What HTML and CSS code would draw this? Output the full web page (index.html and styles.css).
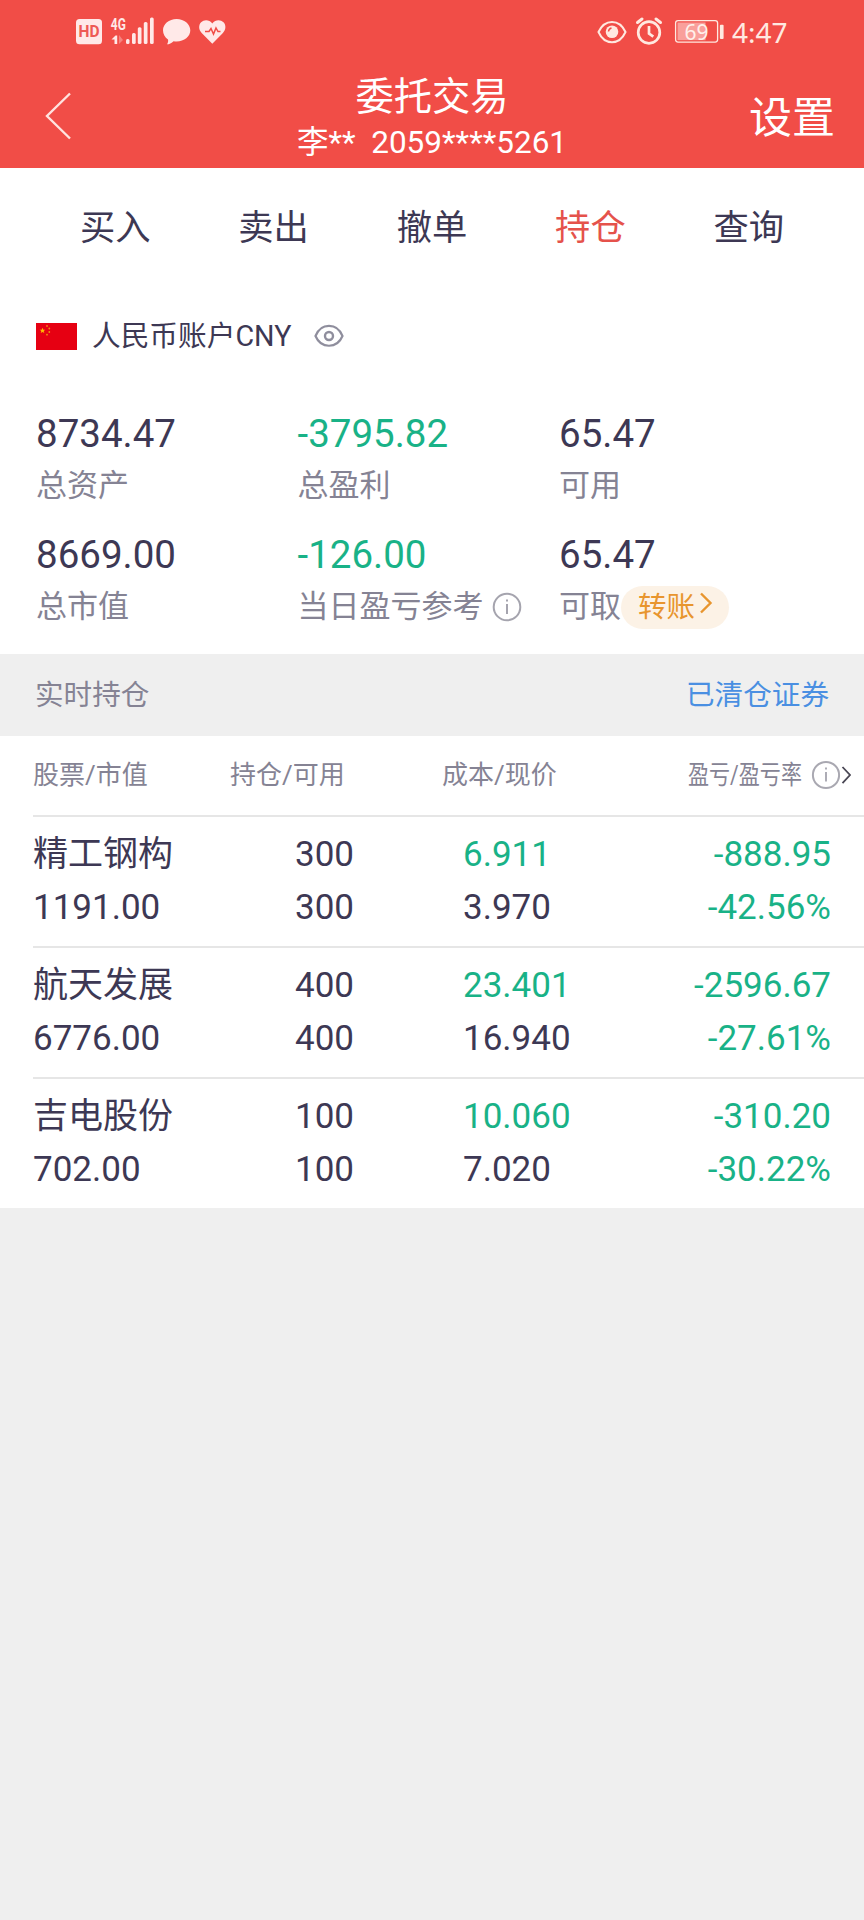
FILE: index.html
```
<!DOCTYPE html>
<html lang="zh-CN">
<head>
<meta charset="utf-8">
<title>委托交易</title>
<link rel="stylesheet" href="styles.css">
</head>
<body>
<header class="top">
  <div class="status">
    <svg class="status-left" width="152" height="30" viewBox="75 16 152 30">
      <rect x="76" y="19" width="26" height="25.3" rx="3.5" fill="#ffe9e8"/>
      <text class="hd" x="89" y="37.2" text-anchor="middle" textLength="21" lengthAdjust="spacingAndGlyphs">HD</text>
      <text class="net" x="110.8" y="30" textLength="15" lengthAdjust="spacingAndGlyphs">4G</text>
      <path d="M111.5 39.5l4-4h1.700v8.500h-2.700v-4.500z" fill="#ffe9e8"/>
      <path d="M119 35v9l4-4z" fill="#ffe9e8" opacity=".35"/>
      <g fill="#ffe9e8">
        <rect x="126" y="39" width="3.500" height="5" rx="1.500"/>
        <rect x="132" y="33" width="3.700" height="11" rx="1.500"/>
        <rect x="137.800" y="27.300" width="3.700" height="16.700" rx="1.500"/>
        <rect x="143.800" y="22" width="3.700" height="22" rx="1.500"/>
        <rect x="150" y="17.500" width="3.700" height="26.500" rx="1.500"/>
        <path d="M176.600 19c7.600 0 13.700 5 13.700 11.300s-6.100 11.200-13.700 11.200c-1 0-2 0-3-.3-2 2-4.500 3.100-6.600 3.100 1-1.500 1.400-3.200 1-4.800-3.100-2.100-5-5.400-5-9.200C163 24 169 19 176.600 19z"/>
        <path d="M212.300 43.700l-10.600-10.800c-3.300-3.400-3.200-8.100-.6-10.700 3.200-3.200 8.400-2.600 11.200 1.200 2.800-3.800 8-4.400 11.200-1.200 2.600 2.600 2.700 7.300-.6 10.700z"/>
      </g>
      <path d="M205 31.500h4l2-3 2.500 5.500 2.500-6 2 3.500h2.500" fill="none" stroke="#f14d47" stroke-width="1.500"/>
    </svg>
    <svg class="status-right" width="128" height="30" viewBox="597 16 128 30">
      <g fill="none" stroke="#ffe9e0">
        <path d="M598.500 32c6-13.500 21-13.500 27 0-6 13.500-21 13.500-27 0z" stroke-width="2"/>
        <circle cx="649" cy="32.500" r="10.800" stroke-width="2.700"/>
        <path d="M649 26v7.500l4.300 3.200" stroke-width="2.700"/>
        <path d="M637.500 22.500l4.500-3.500M660.500 22.500l-4.500-3.500" stroke-width="3" stroke-linecap="round"/>
        <rect x="675.600" y="20.600" width="42" height="21.500" rx="2.500" stroke-width="1.300"/>
      </g>
      <circle cx="612" cy="31.800" r="6.300" fill="#ffe9e0"/>
      <path d="M608.500 31.500a4 4 0 0 1 3-3.500" fill="none" stroke="#f14d47" stroke-width="1.500"/>
      <rect x="677.500" y="22.500" width="28" height="17.700" fill="#f9a09b"/>
      <rect x="719.900" y="24.700" width="3.700" height="14.300" rx="1" fill="#ffe9e0"/>
      <text class="battery" x="696.600" y="39.700" text-anchor="middle">69</text>
    </svg>
    <span class="clock">4:47</span>
  </div>
  <div class="bar">
    <svg class="back" width="28" height="50" viewBox="0 0 28 50"><path d="M26 2.500L3 25l23 22.500" fill="none" stroke="#ffe3df" stroke-width="2.400"/></svg>
    <div class="heading">
      <h1 class="title">委托交易</h1>
      <div class="sub">李**&nbsp; 2059****5261</div>
    </div>
    <span class="settings">设置</span>
  </div>
</header>
<main class="sheet">
  <nav class="tabs">
    <span class="tab">买入</span><span class="tab">卖出</span><span class="tab">撤单</span><span class="tab active">持仓</span><span class="tab">查询</span>
  </nav>
  <div class="account">
    <svg width="41" height="27" viewBox="0 0 41 27"><rect width="41" height="27" fill="#e60012"/><path d="M6.500 4.800l.8 2h2l-1.600 1.300.6 2-1.800-1.200-1.800 1.200.6-2L3.700 6.800h2z" fill="#fb0"/><g fill="#f08a10"><circle cx="11" cy="3" r=".9"/><circle cx="13.300" cy="5.500" r=".9"/><circle cx="13.300" cy="9" r=".9"/><circle cx="11" cy="11.700" r=".9"/></g></svg>
    <span class="account-name">人民币账户CNY</span>
    <svg width="30" height="24" viewBox="0 0 30 24" fill="none" stroke="#8f8e9d"><path d="M1.500 12C7-1.500 23-1.500 28.500 12 23 25 7 25 1.500 12z" stroke-width="2.200"/><circle cx="15" cy="12" r="4" stroke-width="2.400"/></svg>
  </div>
  <section class="summary">
    <div><div class="num">8734.47</div><div class="label">总资产</div></div>
    <div><div class="num green">-3795.82</div><div class="label">总盈利</div></div>
    <div><div class="num">65.47</div><div class="label">可用</div></div>
    <div><div class="num">8669.00</div><div class="label">总市值</div></div>
    <div><div class="num green">-126.00</div><div class="label">当日盈亏参考<svg class="info" width="30" height="30" viewBox="0 0 30 30"><circle cx="15" cy="15" r="13.300" fill="none" stroke="#a5a4ae" stroke-width="2"/><path d="M15 12v10M15 7.500v2" stroke="#a5a4ae" stroke-width="2"/></svg></div></div>
    <div><div class="num">65.47</div><div class="label">可取<span class="pill">转账<svg width="14" height="22" viewBox="0 0 14 22"><path d="M2 1.500l9.500 9.500L2 20.500" fill="none" stroke="#e8952e" stroke-width="2.400"/></svg></span></div></div>
  </section>
  <div class="section-bar"><span>实时持仓</span><a class="link">已清仓证券</a></div>
  <section class="holdings">
    <div class="cols">
      <span>股票/市值</span><span>持仓/可用</span><span>成本/现价</span>
      <span class="last"><span class="narrow">盈亏/盈亏率</span><svg width="40" height="30" viewBox="0 0 40 30"><circle cx="15" cy="15" r="13.100" fill="none" stroke="#a9a8b1" stroke-width="2"/><path d="M15 12v9.500M15 7.500v2" stroke="#a5a4ae" stroke-width="1.800"/><path d="M31.500 7l7.500 8-7.500 8.200" fill="none" stroke="#4a4754" stroke-width="1.800"/></svg></span>
    </div>
    <div class="row">
      <div>精工钢构<br>1191.00</div><div>300<br>300</div><div><span class="green">6.911</span><br>3.970</div><div class="gain">-888.95<br>-42.56%</div>
    </div>
    <div class="row">
      <div>航天发展<br>6776.00</div><div>400<br>400</div><div><span class="green">23.401</span><br>16.940</div><div class="gain">-2596.67<br>-27.61%</div>
    </div>
    <div class="row">
      <div>吉电股份<br>702.00</div><div>100<br>100</div><div><span class="green">10.060</span><br>7.020</div><div class="gain">-310.20<br>-30.22%</div>
    </div>
  </section>
</main>
</body>
</html>
```
FILE: styles.css
```
* { box-sizing: border-box; }
body {
  margin: 0;
  min-height: 1920px;
  background: #efefef;
  color: #3d3854;
  font-family: Roboto, "Noto Sans CJK SC", sans-serif;
  white-space: nowrap;
}
svg { display: block; flex: none; }
.green { color: #19b287; }

/* Header */
.top { height: 168px; background: #f14d47; color: #fff; }
.status { display: flex; height: 72px; padding: 16px 77px 0 75px; }
.status-right { margin-left: auto; }
.clock {
  width: 55px;
  margin-left: 7px;
  color: #ffe9e0;
  font: 28px/32px "Noto Sans", sans-serif;
}
.hd { font: bold 16px Roboto, sans-serif; fill: #ee5a55; }
.net { font: bold 16px Roboto, sans-serif; fill: #ffe9e8; }
.battery { font: 21px "Noto Sans", sans-serif; fill: #fff0ea; }
.bar {
  display: grid;
  grid-template-columns: 236px 1fr 251px;
  height: 96px;
  padding: 0 29px 0 44px;
}
.back { margin-top: 19px; }
.heading { text-align: center; }
.title { margin: 0; font-size: 38.3px; line-height: 49px; font-weight: 400; }
.sub { font-size: 31.5px; line-height: 43px; }
.settings { justify-self: end; font-size: 43px; line-height: 93px; }

/* Tabs and account */
.sheet { background: #fff; }
.tabs { display: flex; padding: 0 36px; }
.tab { flex: 1; text-align: center; font-size: 35.3px; line-height: 120px; }
.active { color: #e5524b; }
.account {
  display: flex;
  align-items: center;
  height: 50px;
  margin-top: 23px;
  padding-left: 36px;
}
.account-name { margin: 0 23px 0 15px; font-size: 28.7px; line-height: 46px; padding-bottom: 1px; }

/* Asset summary */
.summary {
  display: grid;
  grid-template-columns: 261.5px 261.5px 1fr;
  grid-auto-rows: 121px;
  height: 293px;
  padding: 47px 0 0 36px;
}
.num { font-size: 38.5px; line-height: 51px; }
.label { display: flex; align-items: center; font-size: 31px; line-height: 54px; color: #858394; }
.info { margin-left: 8px; }
.pill {
  display: flex;
  height: 43px;
  padding: 0 16px 0 17px;
  border-radius: 22px;
  background: #fcf2e6;
  color: #e8952e;
  font-size: 28.5px;
  line-height: 43px;
}
.pill svg { margin: 6px 0 0 4px; }

/* Holdings */
.section-bar {
  display: flex;
  justify-content: space-between;
  height: 82px;
  padding: 0 35px;
  background: #efefef;
  color: #858394;
  font-size: 28.6px;
  line-height: 82px;
}
.link { color: #4a8fe2; }
.holdings { padding-left: 33px; }
.cols {
  display: grid;
  grid-template-columns: 197px 212px 246px 1fr;
  height: 80.5px;
  border-bottom: 2.5px solid #e6e6e6;
  color: #858394;
  font-size: 26px;
  line-height: 78px;
}
.last { display: flex; align-items: center; }
.narrow { width: 123px; transform: scaleX(.81); transform-origin: 0 50%; }
.row {
  display: grid;
  grid-template-columns: 262px 168px 1fr 200px;
  height: 131.2px;
  padding: 11px 33px 0 0;
  border-bottom: 2px solid #e6e6e6;
  font-size: 35px;
  line-height: 53px;
}
.row:last-child { height: 129px; border-bottom: 0; }
.gain { color: #19b287; text-align: right; }
```
